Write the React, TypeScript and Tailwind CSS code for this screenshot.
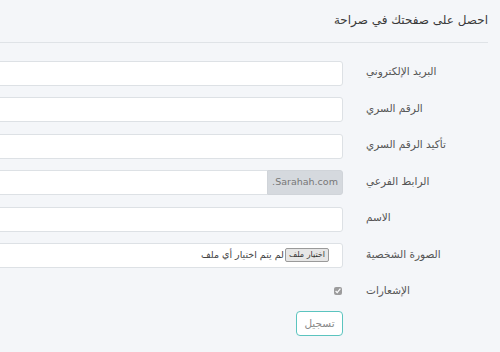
import React, { useState } from "react";

const font = { fontFamily: '"DejaVu Sans", "Noto Sans", sans-serif' };

const Row = ({ label, children }: { label: string; children: React.ReactNode }) => (
  <div className="flex flex-row items-center h-[25px] mb-[11.5px]">
    <label className="w-[122px] shrink-0 text-[10.5px] text-[#555] mt-[-1px]" style={{ textAlign: "left" }}>
      <span className="inline-block" style={{ direction: "rtl" }}>{label}</span>
    </label>
    <div className="w-[23px] shrink-0" />
    <div className="flex-1 h-full">{children}</div>
  </div>
);

const TextInput = ({ type = "text" }: { type?: string }) => (
  <input
    type={type}
    className="w-full h-full bg-white border border-[#dde1e5] rounded-[3px] outline-none px-3 text-[12px]"
  />
);

export default function App() {
  const [notify, setNotify] = useState(true);

  return (
    <div className="w-[500px] h-[352px] overflow-hidden bg-[#f4f6f9]" style={font}>
      <div dir="rtl" className="w-[700px] ml-[-200px]">
        <div className="pr-[12px] pl-0">
          <div className="h-[43px] border-b border-[#dfe3e7] flex items-center">
            <h3 className="text-[12px] text-[#3a3a3a] mt-[-3px]">احصل على صفحتك في صراحة</h3>
          </div>
        </div>

        <form className="pr-[12px] pt-[17px]">
          <Row label="البريد الإلكتروني">
            <TextInput type="email" />
          </Row>
          <Row label="الرقم السري">
            <TextInput type="password" />
          </Row>
          <Row label="تأكيد الرقم السري">
            <TextInput type="password" />
          </Row>
          <Row label="الرابط الفرعي">
            <div className="flex flex-row h-full">
              <span className="w-[76px] h-full bg-[#d5d9de] border border-[#d0d4d9] rounded-r-[3px] flex items-center justify-center text-[9.5px] text-[#777]">
                Sarahah.com.
              </span>
              <input className="flex-1 h-full bg-white border border-[#dde1e5] border-r-0 rounded-l-[3px] outline-none px-3" />
            </div>
          </Row>
          <Row label="الاسم">
            <TextInput />
          </Row>
          <Row label="الصورة الشخصية">
            <div className="w-full h-full bg-white border border-[#dde1e5] rounded-[3px] flex flex-row items-center pr-[13px]">
              <span className="h-[14px] px-[3px] bg-[#e6e6e6] border border-[#9a9a9a] rounded-[2px] text-[8px] text-[#333] flex items-center leading-none">
                اختيار ملف
              </span>
              <span className="text-[9.5px] text-[#444] mr-[1px]">لم يتم اختيار أي ملف</span>
            </div>
          </Row>
          <div className="flex flex-row items-center h-[24px] mt-[2px] mb-[8px]">
            <label className="w-[122px] shrink-0 text-[10.5px] text-[#555]" style={{ textAlign: "left" }}>
              <span className="inline-block" style={{ direction: "rtl" }}>الإشعارات</span>
            </label>
            <div className="w-[23px] shrink-0" />
            <div className="flex-1 flex items-center pr-[1px]">
              <input
                type="checkbox"
                checked={notify}
                onChange={() => setNotify(!notify)}
                className="w-[8px] h-[8px] m-0 accent-[#777] opacity-70"
              />
            </div>
          </div>
          <div className="flex flex-row">
            <div className="w-[145px] shrink-0" />
            <button
              type="button"
              className="w-[47px] h-[25px] bg-white border border-[#5bc4bf] rounded-[4px] text-[10.5px] text-[#888]"
            >
              تسجيل
            </button>
          </div>
        </form>
      </div>
    </div>
  );
}
